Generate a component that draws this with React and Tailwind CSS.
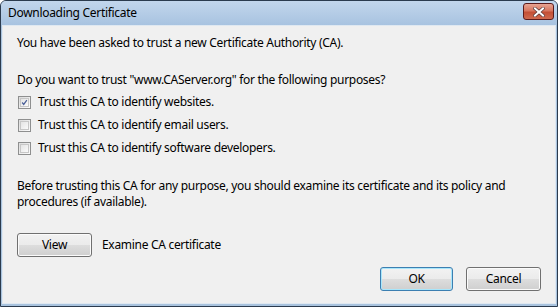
import React from "react";

const font = { fontFamily: '"Noto Sans", "Open Sans", sans-serif' };

function Check({ checked }) {
  return (
    <span className="flex h-[13px] w-[13px] items-center justify-center border border-[#8e8f8f] bg-gradient-to-br from-[#dcdcdc] to-[#fbfbfb]">
      <span className="flex h-[9px] w-[9px] items-center justify-center border border-[#c7c7c7] bg-gradient-to-br from-[#e4e4e4] to-[#fafafa]">
        {checked && (
          <svg width="9" height="9" viewBox="0 0 9 9">
            <path d="M1.5 4.5 L3.5 7 L7.5 1.5" fill="none" stroke="#4a5f97" strokeWidth="1.6" />
          </svg>
        )}
      </span>
    </span>
  );
}

function Button({ children, className = "", focused }) {
  return (
    <div
      className={`flex h-[24px] items-center justify-center rounded-[3px] border text-[12px] text-black ${
        focused ? "border-[#3c7fb1] shadow-[inset_0_0_0_1px_#a8e6fb]" : "border-[#707070] shadow-[inset_0_0_0_1px_#fbfbfb]"
      } bg-[linear-gradient(#f2f2f2_0%,#ebebeb_50%,#dddddd_51%,#cfcfcf_100%)] ${className}`}
    >
      {children}
    </div>
  );
}

export default function App() {
  const purposes = [
    { label: "Trust this CA to identify websites.", checked: true },
    { label: "Trust this CA to identify email users.", checked: false },
    { label: "Trust this CA to identify software developers.", checked: false },
  ];

  return (
    <div style={font} className="flex h-[307px] w-[558px] flex-col overflow-hidden rounded-t-[6px] border border-[#2b3b4e] bg-[#a9c3de] text-[12px] tracking-[-0.3px] text-black">
      <div className="flex h-[24px] shrink-0 items-center justify-between bg-[linear-gradient(#c2d6ec,#a8c3e0)] pl-[7px] pr-[3px]">
        <span className="text-[12px]">Downloading Certificate</span>
        <div className="mt-[-3px] flex h-[17px] w-[31px] items-center justify-center rounded-[3px] border border-[#5b1b1b] bg-[linear-gradient(#e8a493_0%,#d7765f_45%,#c44f35_55%,#cf6a4f_100%)]">
          <svg width="12" height="10" viewBox="0 0 12 10">
            <path d="M2 1.5 L10 8.5 M10 1.5 L2 8.5" stroke="#5a3a3a" strokeWidth="3.4" strokeLinecap="square" />
            <path d="M2 1.5 L10 8.5 M10 1.5 L2 8.5" stroke="#ffffff" strokeWidth="2" strokeLinecap="square" />
          </svg>
        </div>
      </div>

      <div className="mx-[1px] mb-[2px] flex flex-1 flex-col border border-[#dfe8f1] bg-[#f0f0f0] px-[14px] pt-[9px]">
        <p className="leading-[16px]">You have been asked to trust a new Certificate Authority (CA).</p>

        <p className="mt-[21px] leading-[16px]">Do you want to trust "www.CAServer.org" for the following purposes?</p>

        <div className="mt-[6px] flex flex-col gap-[7px] pl-[1px]">
          {purposes.map((p) => (
            <label key={p.label} className="flex h-[16px] items-center gap-[7px]">
              <Check checked={p.checked} />
              <span>{p.label}</span>
            </label>
          ))}
        </div>

        <p className="mt-[22px] leading-[16px]">
          Before trusting this CA for any purpose, you should examine its certificate and its policy and
          <br />
          procedures (if available).
        </p>

        <div className="mt-[23px] flex items-center gap-[10px]">
          <Button className="w-[75px]">View</Button>
          <span>Examine CA certificate</span>
        </div>

        <div className="mt-[10px] flex justify-end gap-[13px] pr-[0px]">
          <Button focused className="w-[73px]">OK</Button>
          <Button className="w-[75px]">Cancel</Button>
        </div>
      </div>
    </div>
  );
}
